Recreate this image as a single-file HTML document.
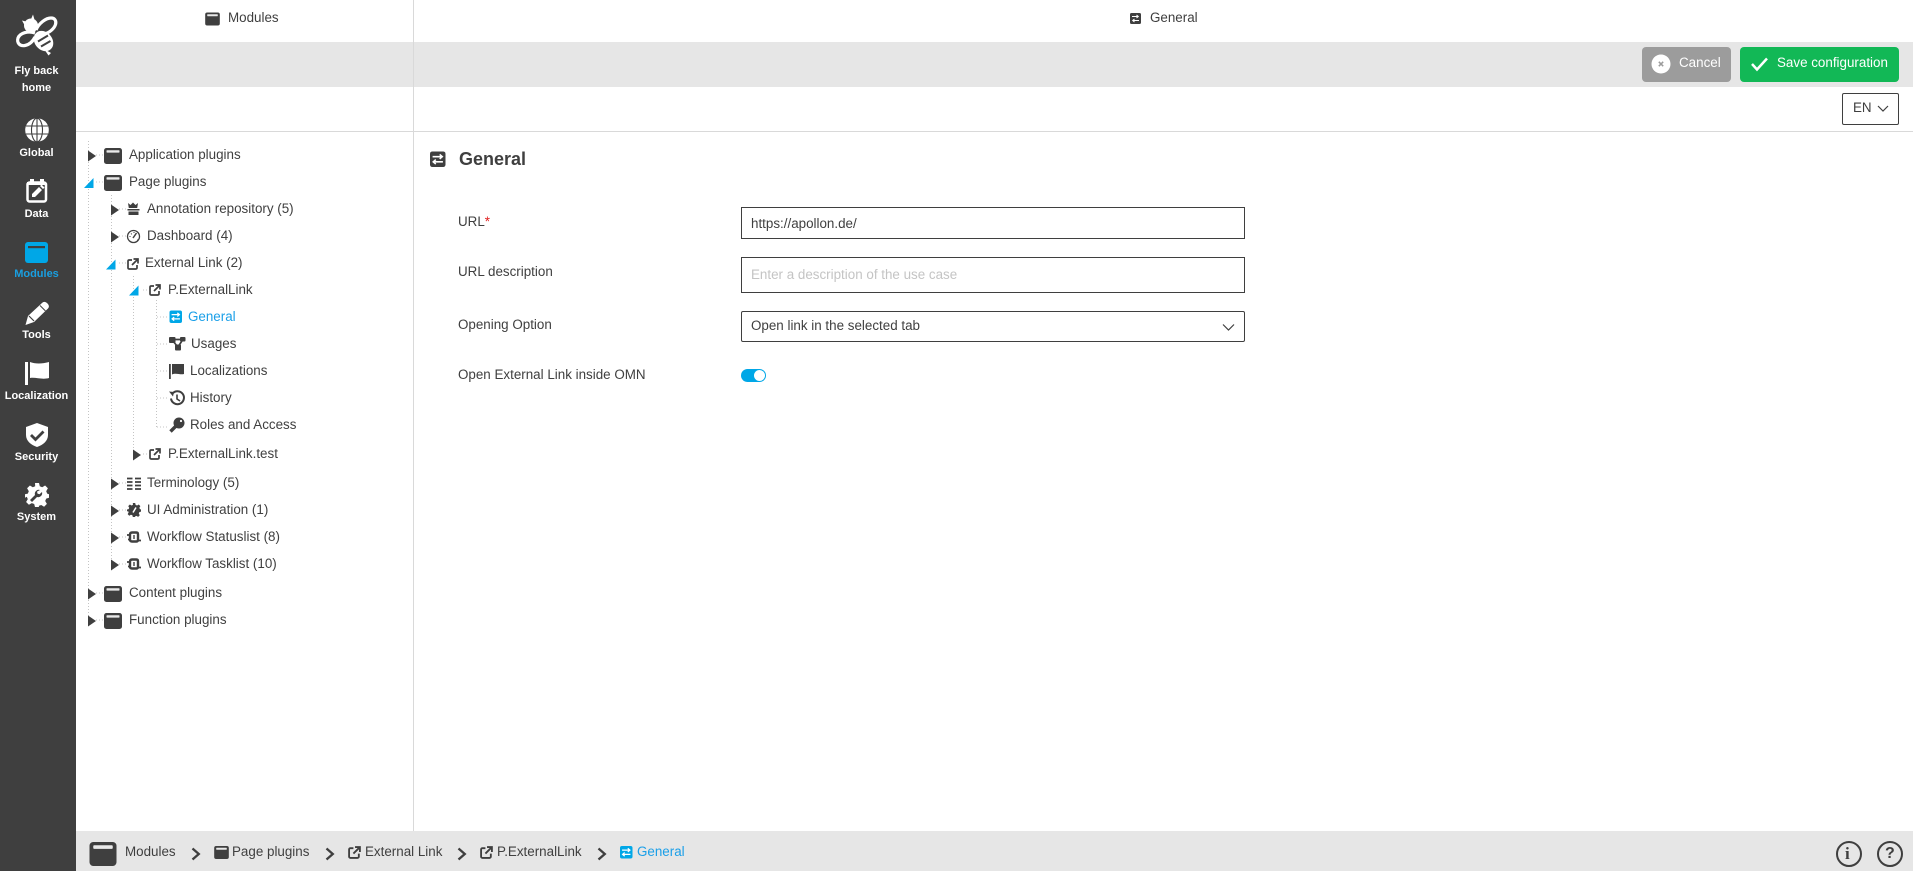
<!DOCTYPE html>
<html lang="en"><head><meta charset="utf-8"><title>Modules - General</title>
<style>
html,body{margin:0;padding:0;width:1913px;height:871px;overflow:hidden;background:#fff;font-family:"Liberation Sans",Arial,sans-serif;color:#3f3f3f;font-size:13.4px}
.b{position:absolute}
.t{position:absolute;line-height:20px;white-space:nowrap}
.s{position:absolute;left:0;width:73px;text-align:center;line-height:16px;font-size:11px;font-weight:bold;color:#fff;white-space:nowrap}
.f{position:absolute;left:741px;width:504px;box-sizing:border-box;border:1px solid #3f3f3f;background:transparent;padding:0 0 0 9px;margin:0;font:13.4px "Liberation Sans",Arial,sans-serif;color:#3f3f3f;outline:none}
.f::placeholder{color:#c4c4c4;opacity:1}
svg.o{position:absolute;left:0;top:0}
</style></head><body>
<div class="b" style="left:0;top:0;width:76px;height:871px;background:#3f3f3f"></div>
<div class="b" style="left:76px;top:42px;width:1837px;height:45px;background:#e6e6e6"></div>
<div class="b" style="left:76px;top:131px;width:1837px;height:1px;background:#d9d9d9"></div>
<div class="b" style="left:413px;top:0;width:1px;height:831px;background:#d9d9d9"></div>
<div class="b" style="left:76px;top:831px;width:1837px;height:40px;background:#e6e6e6"></div>

<div class="b" style="left:1642px;top:47px;width:89px;height:35px;background:#9c9c9c;border-radius:4px"></div>
<div class="b" style="left:1740px;top:47px;width:159px;height:35px;background:#12b856;border-radius:4px"></div>
<div class="b" style="left:1842px;top:93px;width:57px;height:32px;box-sizing:border-box;border:1px solid #3f3f3f;border-radius:2px;background:#fff"></div>

<svg class="o" width="1913" height="871" viewBox="0 0 1913 871">
<defs>
<symbol id="win" viewBox="0 0 18 16"><rect width="18" height="16" rx="2.5" fill="#3f3f3f"/><rect x="2.5" y="2.2" width="13" height="2.4" rx=".6" fill="#e9e9e9"/></symbol>
<symbol id="ext" viewBox="0 0 12 12"><path d="M5 2H2.2A1.2 1.2 0 0 0 1 3.2v6.6A1.2 1.2 0 0 0 2.2 11h6.6A1.2 1.2 0 0 0 10 9.8V7M6.5 1H11v4.500M11 1L5 7" fill="none" stroke="#3f3f3f" stroke-width="1.700"/></symbol>
<symbol id="sl" viewBox="0 0 12 12"><rect width="12" height="12" rx="1.800" fill="currentColor"/><path d="M2 4h7M7.500 2.300L9.500 4L7.500 5.700M10 8H3M4.500 6.300L2.500 8L4.500 9.700" fill="none" stroke="#fff" stroke-width="1.200"/></symbol>
<symbol id="wf" viewBox="0 0 14 12"><path d="M3 3.500Q3 1.500 5 1.500H9.500Q11 1.500 11 3.500V8.500Q11 10.500 9.500 10.500H5Q3 10.500 3 8.500Z" fill="none" stroke="#3f3f3f" stroke-width="2.400"/><path d="M0 4h3M1 8.500h3M11 9.500h3M10 3h2" stroke="#3f3f3f" stroke-width="1.800"/><path d="M7 4v4" stroke="#3f3f3f" stroke-width="1.400"/></symbol>
<symbol id="gear" viewBox="0 0 24 24"><path d="M10 0h4l.8 3.200 2.400 1 2.900-1.700 2.800 2.800-1.700 2.900 1 2.400L24 11.200v3.600l-2.800.8-1 2.400 1.700 2.900-2.800 2.800-2.900-1.700-2.400.9L14 24h-4l-.8-3-2.400-.9-2.900 1.700-2.800-2.800 1.700-2.900-1-2.400L0 14.800v-3.600l2.800-.6 1-2.400-1.700-2.900 2.800-2.800 2.900 1.700 2.400-1z" fill="currentColor"/><path d="M15 7a4 4 0 0 0-5 5l-5 5 2 2 5-5a4 4 0 0 0 5-5l-2.500 2.200-2-.6-.5-2z" fill="#3f3f3f"/></symbol>
<symbol id="chev" viewBox="0 0 10 14"><path d="M1.500 1.500L7.800 7L1.500 12.500" fill="none" stroke="#3f3f3f" stroke-width="2.300"/></symbol>
</defs>

<!-- logo -->
<g fill="none" stroke="#fff" stroke-width="3.200" stroke-linejoin="round">
<path d="M36 30C39 23 46 18 51 18C55 18 56.500 21 55.500 24.500C54 29 49 33 44 34"/>
<path d="M35 33C28 30.500 20 33 18 38C16.500 43 20 46.500 25 45.500C30 44.500 33 41 35 37"/>
</g>
<circle cx="31" cy="25.500" r="7" fill="#fff"/>
<path d="M33 14.500l2 7-5 0zM22 20.500l6 1.500-3 4z" fill="#fff"/>
<ellipse cx="43.500" cy="41" rx="11" ry="8.800" transform="rotate(50 43.500 41)" fill="#fff"/>
<path d="M44 49l7 4-2.500 2.500z" fill="#fff"/>
<path d="M38 41.500L48 35.500M41 46.500L50.500 41" stroke="#3f3f3f" stroke-width="2"/>

<!-- global -->
<circle cx="37" cy="130" r="11.800" fill="#fff"/>
<g fill="none" stroke="#3f3f3f" stroke-width="1.100"><ellipse cx="37" cy="130" rx="5.500" ry="11.800"/><path d="M37 118v24M26 126h22M26 134h22"/></g>
<!-- data -->
<rect x="27.500" y="182.500" width="18.500" height="19" rx="2" fill="none" stroke="#fff" stroke-width="2.500"/>
<rect x="30" y="179" width="4" height="5" fill="#fff"/><rect x="40" y="179" width="4" height="5" fill="#fff"/>
<path d="M27 182h19v3H27z" fill="#fff"/>
<path d="M32 197v-3l7-7 3 3-7 7zM40 186l1.500-1.500 3 3L43 189z" fill="#fff"/>
<!-- modules -->
<rect x="25" y="242" width="23" height="21" rx="3" fill="#00a7e7"/>
<rect x="28" y="246" width="17" height="2.200" fill="#3f3f3f"/>
<!-- tools -->
<path d="M25.500 325L28 316L42 303C44 301 46 302 47.500 303.500C49 305 49.500 307 48 308.500L34 322Z" fill="#fff"/>
<path d="M29 316L34 321" stroke="#3f3f3f" stroke-width="1.200"/><path d="M40 305.500L45.500 311" stroke="#3f3f3f" stroke-width="1"/>
<!-- flag -->
<rect x="25" y="362" width="3" height="23" fill="#fff"/>
<path d="M30 362C35 364 42 364 49 362V378C42 380 36 377 30 378Z" fill="#fff"/>
<!-- shield -->
<path d="M37 423L48 427V435C48 441 43 445 37 447C31 445 26 441 26 435V427Z" fill="#fff"/>
<path d="M31 435L35.500 439.500L43.500 431.500" fill="none" stroke="#3f3f3f" stroke-width="2.800"/>
<!-- gear -->
<use href="#gear" x="25" y="483" width="24" height="24" color="#fff"/>

<!-- header icons -->
<use href="#win" x="205" y="12.500" width="15" height="13"/>
<rect x="1130" y="13" width="11" height="11" rx="1.500" fill="#3f3f3f"/>
<path d="M1132 16.500h6M1136.500 15l1.800 1.500-1.800 1.500M1139 20.500h-6M1134.500 19l-1.800 1.500 1.800 1.500" fill="none" stroke="#fff" stroke-width="1"/>

<!-- dotted -->
<g stroke="#c4c4c4" stroke-width="1" stroke-dasharray="1 2" fill="none">
<path d="M88.500 141V620M111.500 195V564M133.500 276V454M156.500 300V427"/>
<path d="M96 155h7M96 182h7M119 209h7M119 236h7M119 263h7M143 290h6M143 454h6M119 483h7M119 510h7M119 537h7M119 564h7M96 593h7M96 620h7M157 317h11M157 344h11M157 371h11M157 398h11M157 427h11"/>
</g>
<!-- triangles -->
<g fill="#3f3f3f" transform="translate(0 .5)">
<path d="M88 150l8 5.500-8 5.500zM88 588l8 5.500-8 5.500zM88 615l8 5.500-8 5.500z"/>
<path d="M111 204l8 5.500-8 5.500zM111 231l8 5.500-8 5.500zM111 478l8 5.500-8 5.500zM111 505l8 5.500-8 5.500zM111 532l8 5.500-8 5.500zM111 559l8 5.500-8 5.500z"/>
<path d="M133 449l8 5.500-8 5.500z"/>
</g>
<g fill="#00a7e7">
<path d="M93.500 178v10h-9.500zM115.500 259.500v10h-9.500zM138.500 285.500v10h-9.500z"/>
</g>
<!-- tree icons -->
<use href="#win" x="104" y="148" width="18" height="16"/>
<use href="#win" x="104" y="175" width="18" height="16"/>
<use href="#win" x="104" y="586" width="18" height="16"/>
<use href="#win" x="104" y="613" width="18" height="16"/>
<!-- annotation -->
<g fill="#3f3f3f"><path d="M128 203l2.500 2 2.500-2.500 2.500 2.500 2.500-2-.8 5h-8.400zM127.500 209h12v1.500h-12zM128.500 211.500h10V215h-10z"/></g>
<!-- dashboard -->
<circle cx="133.500" cy="236.500" r="6" fill="none" stroke="#3f3f3f" stroke-width="1.300"/>
<path d="M133 238L136.500 233" stroke="#3f3f3f" stroke-width="1.500"/>
<path d="M129.500 236.500h1M131 233.500l.8.800M134 232v1M137 240h1" stroke="#3f3f3f"/>
<use href="#ext" x="127" y="258" width="12" height="12"/>
<use href="#ext" x="149" y="284" width="12" height="12"/>
<use href="#ext" x="149" y="448" width="12" height="12"/>
<use href="#sl" x="169.500" y="310.500" width="12.500" height="12.500" color="#00a7e7"/>
<!-- usages -->
<g fill="#3f3f3f"><rect x="169" y="337" width="6.500" height="6" rx="1"/><rect x="180" y="337" width="5.500" height="4.500" rx="1"/><rect x="175" y="344.500" width="6" height="6" rx="1"/></g>
<path d="M172 339.500H182M172 340L178 347M182.500 340L178 347" stroke="#3f3f3f" stroke-width="1.700"/>
<!-- flag -->
<rect x="169" y="364" width="1.800" height="15" fill="#3f3f3f"/>
<path d="M172 364h12v10c-4 1-8-1.500-12 .5z" fill="#3f3f3f"/>
<!-- history -->
<path d="M172.500 393.500A6.500 6.500 0 1 1 171 398.500" fill="none" stroke="#3f3f3f" stroke-width="2"/>
<path d="M169 391.500l5 .5-1 4.500z" fill="#3f3f3f"/>
<path d="M177 394.500v4.500l3 2" fill="none" stroke="#3f3f3f" stroke-width="1.600"/>
<!-- key -->
<circle cx="179" cy="423" r="5.500" fill="#3f3f3f"/>
<path d="M177 425L170.500 431.500" stroke="#3f3f3f" stroke-width="3.400"/>
<circle cx="181" cy="421" r="1.100" fill="#fff"/>
<!-- terminology -->
<path d="M127 478.500h5.500M127 482h5.500M127 485.500h5.500M127 489h5.500M135 478.500h6M135 482h6M135 485.500h6M135 489h6" stroke="#3f3f3f" stroke-width="1.800"/>
<!-- ui admin -->
<use href="#gear" x="127" y="503" width="14" height="14" color="#3f3f3f"/>
<path d="M133 512.500l3-5" stroke="#fff" stroke-width="1.500"/>
<use href="#wf" x="127" y="531" width="14" height="12"/>
<use href="#wf" x="127" y="558" width="14" height="12"/>

<!-- content heading icon -->
<use href="#sl" x="430" y="151.500" width="15.500" height="15.500" color="#3f3f3f"/>

<!-- select chevron -->
<path d="M1223 324.500l5.500 5.500 5.500-5.500" fill="none" stroke="#3f3f3f" stroke-width="1.200"/>
<!-- toggle -->
<rect x="741" y="369" width="25" height="13" rx="6.500" fill="#00a7e7"/>
<circle cx="759.500" cy="375.500" r="5.500" fill="#fff"/>

<!-- buttons -->
<circle cx="1661" cy="64" r="9.500" fill="#fff"/>
<path d="M1658.800 61.800l4.400 4.400M1663.200 61.800l-4.400 4.400" stroke="#9c9c9c" stroke-width="1.500"/>
<path d="M1752 64l5 5.500 10-11" fill="none" stroke="#fff" stroke-width="2.500"/>
<path d="M1878 106l5 5 5-5" fill="none" stroke="#3f3f3f" stroke-width="1.200"/>

<!-- breadcrumb -->
<use href="#win" x="89" y="842" width="28" height="24"/>
<use href="#chev" x="191" y="847" width="10" height="14"/>
<use href="#win" x="214" y="846" width="15" height="13"/>
<use href="#chev" x="325" y="847" width="10" height="14"/>
<use href="#ext" x="348" y="846" width="13" height="13"/>
<use href="#chev" x="457" y="847" width="10" height="14"/>
<use href="#ext" x="480" y="846" width="13" height="13"/>
<use href="#chev" x="597" y="847" width="10" height="14"/>
<use href="#sl" x="620" y="846" width="12.500" height="12.500" color="#00a7e7"/>
<!-- help -->
<g fill="none" stroke="#3f3f3f" stroke-width="2"><circle cx="1849" cy="854" r="12"/><circle cx="1890" cy="854" r="12"/></g>
</svg>

<div class="s" style="top:63px">Fly back</div>
<div class="s" style="top:80px">home</div>
<div class="s" style="top:145px">Global</div>
<div class="s" style="top:206px">Data</div>
<div class="s" style="top:266px;color:#1a9fe0">Modules</div>
<div class="s" style="top:327px">Tools</div>
<div class="s" style="top:388px">Localization</div>
<div class="s" style="top:449px">Security</div>
<div class="s" style="top:509px">System</div>

<div class="t" style="left:228px;top:8px">Modules</div>
<div class="t" style="left:1150px;top:8px">General</div>

<div class="t" style="left:129px;top:145px">Application plugins</div>
<div class="t" style="left:129px;top:172px">Page plugins</div>
<div class="t" style="left:147px;top:199px">Annotation repository (5)</div>
<div class="t" style="left:147px;top:226px">Dashboard (4)</div>
<div class="t" style="left:145px;top:253px">External Link (2)</div>
<div class="t" style="left:168px;top:280px">P.ExternalLink</div>
<div class="t" style="left:188px;top:307px;color:#1a9fe8">General</div>
<div class="t" style="left:191px;top:334px">Usages</div>
<div class="t" style="left:190px;top:361px">Localizations</div>
<div class="t" style="left:190px;top:388px">History</div>
<div class="t" style="left:190px;top:415px">Roles and Access</div>
<div class="t" style="left:168px;top:444px">P.ExternalLink.test</div>
<div class="t" style="left:147px;top:473px">Terminology (5)</div>
<div class="t" style="left:147px;top:500px">UI Administration (1)</div>
<div class="t" style="left:147px;top:527px">Workflow Statuslist (8)</div>
<div class="t" style="left:147px;top:554px">Workflow Tasklist (10)</div>
<div class="t" style="left:129px;top:583px">Content plugins</div>
<div class="t" style="left:129px;top:610px">Function plugins</div>

<div class="t" style="left:459px;top:149px;font-size:18px;font-weight:bold">General</div>
<div class="t" style="left:458px;top:212px">URL<span style="color:#e02020">*</span></div>
<div class="t" style="left:458px;top:262px">URL description</div>
<div class="t" style="left:458px;top:315px">Opening Option</div>
<div class="t" style="left:458px;top:365px">Open External Link inside OMN</div>

<input class="f" style="top:207px;height:32px" value="https://apollon.de/">
<input class="f" style="top:257px;height:36px;padding-bottom:2px" placeholder="Enter a description of the use case">
<div class="f" style="top:311px;height:31px;line-height:28px;border-radius:2px">Open link in the selected tab</div>

<div class="t" style="left:1679px;top:53px;color:#fff">Cancel</div>
<div class="t" style="left:1777px;top:53px;color:#fff">Save configuration</div>
<div class="t" style="left:1853px;top:98px">EN</div>

<div class="t" style="left:125px;top:842px">Modules</div>
<div class="t" style="left:232px;top:842px">Page plugins</div>
<div class="t" style="left:365px;top:842px">External Link</div>
<div class="t" style="left:497px;top:842px">P.ExternalLink</div>
<div class="t" style="left:637px;top:842px;color:#1a9fe8">General</div>
<div class="t" style="left:1845px;top:844px;font:bold 17px/20px 'Liberation Serif',serif">i</div>
<div class="t" style="left:1885px;top:844px;font-weight:bold;font-size:16px">?</div>
</body></html>
